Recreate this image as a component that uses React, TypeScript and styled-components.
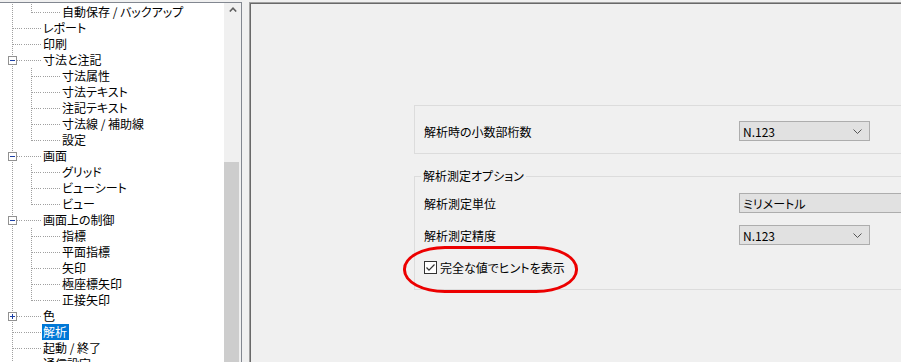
import React from 'react';
import styled, { createGlobalStyle, css } from 'styled-components';

const GlobalStyle = createGlobalStyle`
  html, body { margin: 0; padding: 0; background: #f0f0f0; overflow: hidden; }
  body {
    font-family: "Noto Sans CJK JP", "Noto Sans", sans-serif;
    font-size: 12px;
    color: #000;
    font-feature-settings: "palt";
  }
`;

const Screen = styled.div`
  display: flex;
  align-items: flex-start;
  width: 901px;
  height: 362px;
  padding-top: 2px;
  box-sizing: border-box;
  overflow: hidden;
`;

/* ---------- tree ---------- */

const TreeBox = styled.div`
  flex: none;
  display: flex;
  width: 242px;
  height: 400px;
  box-sizing: border-box;
  border-top: 1px solid #828790;
  border-right: 1px solid #828790;
`;

const TreeList = styled.div`
  flex: 1;
  background: #fff;
  padding-top: 1px;
`;

const TreeRow = styled.div`
  display: flex;
  height: 16px;
  padding-left: 4px;
`;

type Guide = 'pipe' | 'blank' | 'tee' | 'end' | 'dash';
const DOT = '#a0a0a0';
const V = `repeating-linear-gradient(to bottom, ${DOT} 0 1px, transparent 1px 2px)`;
const H = `repeating-linear-gradient(to right, ${DOT} 0 1px, transparent 1px 2px)`;

const guideStyles: Record<Guide, ReturnType<typeof css>> = {
  blank: css``,
  pipe: css`
    background-image: ${V};
    background-size: 1px 16px;
    background-position: 8px 0;
  `,
  tee: css`
    background-image: ${V}, ${H};
    background-size: 1px 16px, 10px 1px;
    background-position: 8px 0, 9px 8px;
  `,
  end: css`
    background-image: ${V}, ${H};
    background-size: 1px 9px, 10px 1px;
    background-position: 8px 0, 9px 8px;
  `,
  dash: css`
    background-image: ${H};
    background-size: 18px 1px;
    background-position: 1px 8px;
  `,
};

const GuideCell = styled.span<{ $kind: Guide }>`
  flex: none;
  width: 19px;
  height: 16px;
  display: flex;
  align-items: flex-start;
  background-repeat: no-repeat;
  ${({ $kind }) => guideStyles[$kind]}
`;

const Expander = styled.span`
  width: 9px;
  height: 9px;
  margin: 4px 0 0 4px;
  box-sizing: border-box;
  border: 1px solid #919191;
  background: #fff;
  display: flex;
  align-items: center;
  justify-content: center;
`;

const TreeLabel = styled.span<{ $selected?: boolean }>`
  height: 16px;
  line-height: 16px;
  padding: 0 2px 0 1px;
  white-space: nowrap;
  background: ${({ $selected }) => ($selected ? '#0078d7' : 'transparent')};
  color: ${({ $selected }) => ($selected ? '#fff' : '#000')};
`;

const ScrollTrack = styled.div`
  flex: none;
  width: 17px;
  background: #f0f0f0;
  display: flex;
  flex-direction: column;
`;

const ScrollButton = styled.div`
  height: 17px;
  display: flex;
  align-items: center;
  justify-content: center;
`;

const ScrollThumb = styled.div`
  width: 15px;
  height: 300px;
  margin-top: 145px;
  background: #cdcdcd;
`;

/* ---------- settings panel ---------- */

const Panel = styled.div`
  position: relative;
  flex: none;
  width: 720px;
  height: 400px;
  margin-left: 7px;
  box-sizing: border-box;
  border-top: 1px solid #a0a0a0;
  border-left: 1px solid #a0a0a0;
  box-shadow: inset 1px 1px 0 #696969;
  padding: 102px 0 0 164px;
`;

const Group = styled.div`
  width: 520px;
  box-sizing: border-box;
  border: 1px solid #dcdcdc;
  padding: 15px 0 12px 9px;
`;

const FieldGroup = styled.fieldset`
  width: 520px;
  box-sizing: border-box;
  margin: 14px 0 0;
  padding: 0;
  min-width: 0;
  border: 1px solid #dcdcdc;
`;

const GroupTitle = styled.legend`
  margin-left: 6px;
  padding: 0 2px;
  line-height: 16px;
  font-size: 12px;
`;

const GroupBody = styled.div`
  display: flex;
  flex-direction: column;
  gap: 12px;
  padding: 9px 0 12px 9px;
`;

const FieldRow = styled.div`
  display: grid;
  grid-template-columns: 315px auto;
  align-items: center;
  height: 20px;
`;

const FieldLabel = styled.span`
  white-space: nowrap;
`;

const Select = styled.div<{ $wide?: boolean }>`
  width: ${({ $wide }) => ($wide ? '220px' : '131px')};
  height: 20px;
  box-sizing: border-box;
  border: 1px solid #adadad;
  background: #e1e1e1;
  display: flex;
  align-items: center;
  justify-content: space-between;
  padding: 0 7px 0 3px;
  white-space: nowrap;
`;

const CheckRow = styled.label`
  display: flex;
  align-items: center;
  gap: 3px;
  height: 20px;
`;

const CheckBox = styled.span`
  width: 13px;
  height: 13px;
  box-sizing: border-box;
  border: 1px solid #333;
  background: #fff;
  display: flex;
  align-items: center;
  justify-content: center;
`;

const Highlight = styled.div`
  position: absolute;
  left: 153px;
  top: 243px;
  width: 175px;
  height: 47px;
  box-sizing: border-box;
  border: 3px solid #ec0000;
  border-radius: 42px / 23px;
  pointer-events: none;
`;

/* ---------- data ---------- */

type Item = {
  label: string;
  guides: Guide[];
  expander?: 'open' | 'closed';
  selected?: boolean;
};

const L1 = (label: string, extra: Partial<Item> = {}): Item => ({
  label,
  guides: ['tee', 'dash'],
  ...extra,
});
const L2 = (label: string, last = false): Item => ({
  label,
  guides: ['pipe', last ? 'end' : 'tee', 'dash'],
});

const items: Item[] = [
  L2('自動保存 / バックアップ', true),
  L1('レポート'),
  L1('印刷'),
  L1('寸法と注記', { expander: 'open' }),
  L2('寸法属性'),
  L2('寸法テキスト'),
  L2('注記テキスト'),
  L2('寸法線 / 補助線'),
  L2('設定', true),
  L1('画面', { expander: 'open' }),
  L2('グリッド'),
  L2('ビューシート'),
  L2('ビュー', true),
  L1('画面上の制御', { expander: 'open' }),
  L2('指標'),
  L2('平面指標'),
  L2('矢印'),
  L2('極座標矢印'),
  L2('正接矢印', true),
  L1('色', { expander: 'closed' }),
  L1('解析', { selected: true }),
  L1('起動 / 終了'),
  L1('通信設定'),
];

const Chevron = () => (
  <svg width="9" height="5" viewBox="0 0 9 5">
    <polyline points="0.5,0.5 4.5,4.5 8.5,0.5" fill="none" stroke="#555" strokeWidth="1" />
  </svg>
);

export default function App() {
  return (
    <>
      <GlobalStyle />
      <Screen>
        <TreeBox>
          <TreeList>
            {items.map((it, i) => (
              <TreeRow key={i}>
                {it.guides.map((g, j) => (
                  <GuideCell key={j} $kind={g}>
                    {j === 0 && it.expander && (
                      <Expander>
                        <svg width="7" height="7" viewBox="0 0 7 7">
                          <rect x="1" y="3" width="5" height="1" fill="#1c3fa4" />
                          {it.expander === 'closed' && (
                            <rect x="3" y="1" width="1" height="5" fill="#1c3fa4" />
                          )}
                        </svg>
                      </Expander>
                    )}
                  </GuideCell>
                ))}
                <TreeLabel $selected={it.selected}>{it.label}</TreeLabel>
              </TreeRow>
            ))}
          </TreeList>
          <ScrollTrack>
            <ScrollButton>
              <svg width="8" height="5" viewBox="0 0 8 5">
                <polyline points="0.8,4.5 4,1.2 7.2,4.5" fill="none" stroke="#606060" strokeWidth="1.6" />
              </svg>
            </ScrollButton>
            <ScrollThumb />
          </ScrollTrack>
        </TreeBox>

        <Panel>
          <Group>
            <FieldRow>
              <FieldLabel>解析時の小数部桁数</FieldLabel>
              <Select>
                <span>N.123</span>
                <Chevron />
              </Select>
            </FieldRow>
          </Group>

          <FieldGroup>
            <GroupTitle>解析測定オプション</GroupTitle>
            <GroupBody>
              <FieldRow>
                <FieldLabel>解析測定単位</FieldLabel>
                <Select $wide>
                  <span>ミリメートル</span>
                </Select>
              </FieldRow>
              <FieldRow>
                <FieldLabel>解析測定精度</FieldLabel>
                <Select>
                  <span>N.123</span>
                  <Chevron />
                </Select>
              </FieldRow>
              <CheckRow>
                <CheckBox>
                  <svg width="11" height="11" viewBox="0 0 11 11">
                    <polyline points="1.5,5.5 4,8.2 9.5,2.5" fill="none" stroke="#333" strokeWidth="1.2" />
                  </svg>
                </CheckBox>
                <span>完全な値でヒントを表示</span>
              </CheckRow>
            </GroupBody>
          </FieldGroup>

          <Highlight />
        </Panel>
      </Screen>
    </>
  );
}
